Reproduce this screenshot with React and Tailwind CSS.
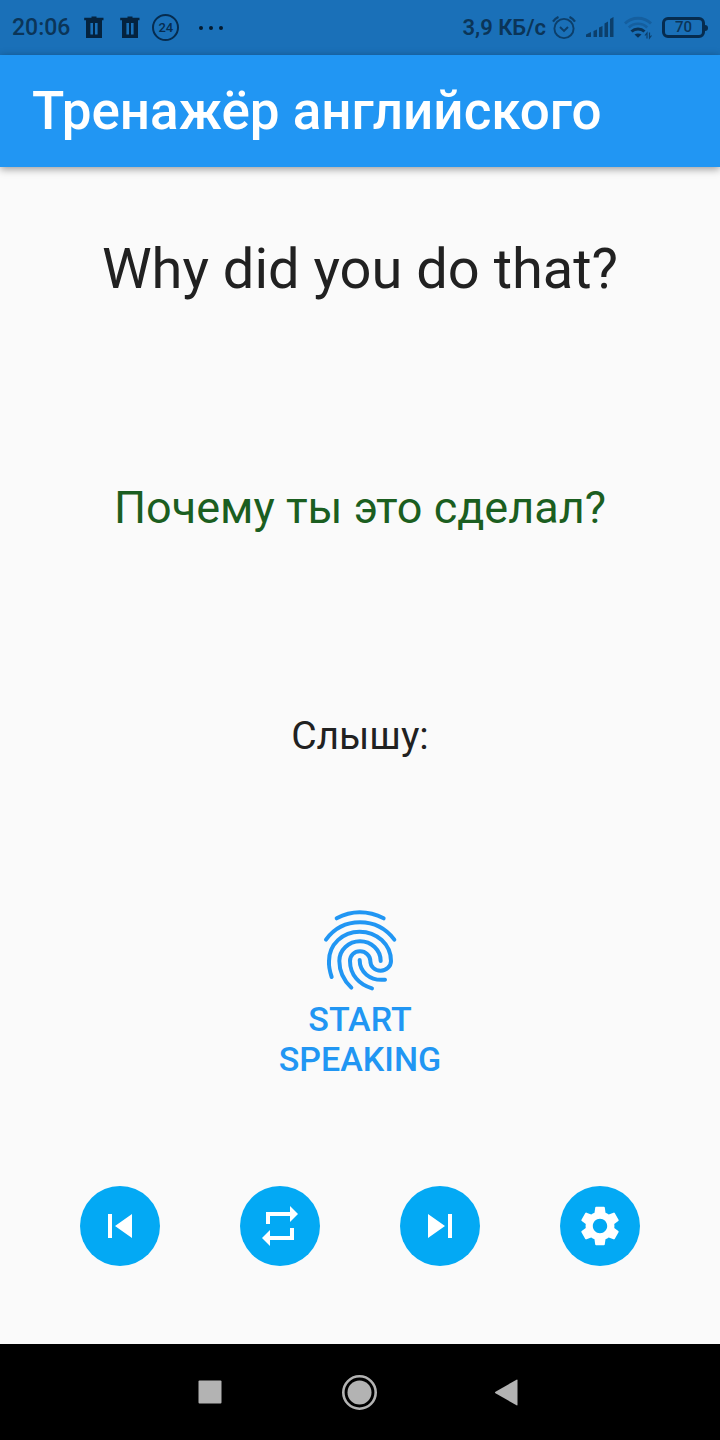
import React from "react";
import { MdSkipPrevious, MdSkipNext, MdRepeat, MdSettings } from "react-icons/md";

function TrashIcon() {
  return (
    <svg viewBox="0 0 20 24" className="h-6 w-5" fill="#04233f" aria-hidden="true">
      <path
        fillRule="evenodd"
        d="M7.500 .5h5v1.200h7V4.200H18V22H2V4.200H.2V1.700h7.300zM6.400 7v11.500h2.600V7zm4.600 0v11.500h2.600V7z"
      />
    </svg>
  );
}

function AlarmIcon() {
  return (
    <svg viewBox="0 0 24 24" className="size-6" fill="none" stroke="#0c3f6b" aria-hidden="true">
      <circle cx="12" cy="12.500" r="9.600" strokeWidth="1.900" />
      <path d="M8 11l4 4 4-4" strokeWidth="1.900" />
      <path d="M1 5.700Q3 2.500 6.500 .9M17.500 .9Q21 2.500 23 5.700" strokeWidth="2.200" />
    </svg>
  );
}

function SignalIcon() {
  return (
    <svg viewBox="0 0 28 20" className="-mt-0.5 h-5 w-7" fill="#0c3f6b" aria-hidden="true">
      <path d="M0 20v-2.500l5-2.500V20zM7.500 14l3.500-1.500V20H7.500zM13 10.500l3.500-1.500V20H13zM18.500 6.500l3.500-2V20h-3.500zM24 2l3.500-2v20H24z" />
    </svg>
  );
}

function WifiIcon() {
  return (
    <svg viewBox="0 0 28 24" className="h-6 w-7" fill="none" aria-hidden="true">
      <path d="M1 7.500C8 .5 20 .5 27 7.500" stroke="#155f9f" strokeWidth="2.800" />
      <path d="M4.800 11.500c5-5 13.400-5 18.400 0" stroke="#155f9f" strokeWidth="2.600" />
      <path d="M7.500 15.500c3.600-3.500 9.400-3.500 13 0" stroke="#0a3357" strokeWidth="3" />
      <path d="M10.500 18.600c2-1.600 5-1.600 7 0L14 21.800z" fill="#0a3357" />
      <path d="M21 19.500l2-2.500v5.500M25.500 16.500V22l2-2.500" stroke="#0c3f6b" strokeWidth="1.200" />
    </svg>
  );
}

function FingerprintIcon() {
  return (
    <svg
      viewBox="150 56 240 252"
      className="h-21 w-20"
      fill="none"
      stroke="currentColor"
      strokeWidth="12"
      strokeLinecap="round"
      aria-hidden="true"
    >
      <path d="M200 87Q234 69 269 69Q306 69 341 87" />
      <path d="M168 151C192 118 228 99 270 99C312 99 348 118 373 151" />
      <path d="M185 263C180 248 176 230 177 215C177 165 218 127 269 127C320 127 363 165 363 215C363 231 349 244 332 244C314 244 301 231 301 215C301 199 287 186 270 186C252 186 240 199 240 215C240 257 268 286 306 297" />
      <path d="M244 295C222 274 208 250 208 215C208 182 236 156 270 156C304 156 332 182 332 215" />
      <path d="M269 212C269 246 298 276 345 271" />
    </svg>
  );
}

function StatusBar() {
  return (
    <div className="flex h-[55px] items-center justify-between bg-[#1a70b8] px-3 text-[#0b3558]">
      <div className="flex items-center gap-4">
        <span className="-mr-0.5 text-[23px] leading-7 font-medium">20:06</span>
        <TrashIcon />
        <TrashIcon />
        <span className="-ml-1 flex size-[27px] items-center justify-center rounded-full border-2 border-[#062c4f] text-[13px] font-medium text-[#062c4f]">
          24
        </span>
        <svg viewBox="0 0 28 4" className="h-1 w-7" fill="#031a30" aria-hidden="true">
          <circle cx="6" cy="2" r="2" />
          <circle cx="16" cy="2" r="2" />
          <circle cx="26" cy="2" r="2" />
        </svg>
      </div>
      <div className="flex items-center gap-2.5">
        <span className="-mr-1 text-[22px] leading-7 font-semibold">3,9 КБ/с</span>
        <AlarmIcon />
        <SignalIcon />
        <WifiIcon />
        <div className="flex items-center">
          <div className="flex h-[21px] w-[43px] items-center justify-center rounded-md border-3 border-[#062c4f] text-[15px] font-medium">
            70
          </div>
          <div className="h-1.5 w-[3px] rounded-r-sm bg-[#062c4f]" />
        </div>
      </div>
    </div>
  );
}

const actions = [
  { label: "Назад", Icon: MdSkipPrevious },
  { label: "Повторить", Icon: MdRepeat },
  { label: "Вперёд", Icon: MdSkipNext },
  { label: "Настройки", Icon: MdSettings },
];

export default function App() {
  return (
    <div className="flex min-h-screen flex-col bg-[#fafafa] font-['Roboto',sans-serif] text-[#212121]">
      <StatusBar />
      <header className="flex h-28 items-center bg-[#2196f3] px-8 shadow-[0_2px_8px_rgba(0,0,0,0.4)]">
        <h1 className="text-[53px] leading-16 font-medium text-white">Тренажёр английского</h1>
      </header>

      <main className="flex flex-1 flex-col items-center pt-[70px] text-center">
        <p className="text-[56px] leading-16">Why did you do that?</p>
        <p className="mt-[179px] text-[45px] leading-14 text-[#1b5e20]">Почему ты это сделал?</p>
        <p className="mt-[176px] text-[39px] leading-12">Слышу:</p>
        <button
          type="button"
          className="mt-[148px] flex w-44 flex-col items-center gap-[7px] text-[34px] leading-10 font-medium text-[#2196f3]"
        >
          <FingerprintIcon />
          START SPEAKING
        </button>
        <div className="mt-auto flex w-full justify-around px-10 pb-[78px]">
          {actions.map(({ label, Icon }) => (
            <button
              key={label}
              type="button"
              aria-label={label}
              className="flex size-20 items-center justify-center rounded-full bg-[#03a9f4] text-white"
            >
              <Icon className="size-12" />
            </button>
          ))}
        </div>
      </main>

      <nav className="flex h-24 items-center justify-center gap-[114px] bg-black text-[#b3b3b3]">
        <button type="button" aria-label="Недавние" className="flex size-9 items-center justify-center">
          <svg viewBox="0 0 24 24" className="size-6" fill="currentColor">
            <rect x="0.500" y="0.500" width="23" height="23" rx="1" />
          </svg>
        </button>
        <button type="button" aria-label="Домой" className="flex size-9 items-center justify-center">
          <svg viewBox="0 0 36 36" className="size-9" fill="currentColor">
            <circle cx="17.500" cy="18.500" r="12" />
            <circle cx="17.500" cy="18.500" r="16.200" fill="none" stroke="currentColor" strokeWidth="2.600" />
          </svg>
        </button>
        <button type="button" aria-label="Вернуться" className="flex size-9 items-center justify-start pl-0.5">
          <svg viewBox="0 0 24 28" className="h-7 w-6" fill="currentColor">
            <path d="M22.500 1.700Q23.500 1.200 23.500 2.300V26.700Q23.500 27.800 22.500 27.300L1.500 15.300Q.4 14.500 1.500 13.700z" />
          </svg>
        </button>
      </nav>
    </div>
  );
}
